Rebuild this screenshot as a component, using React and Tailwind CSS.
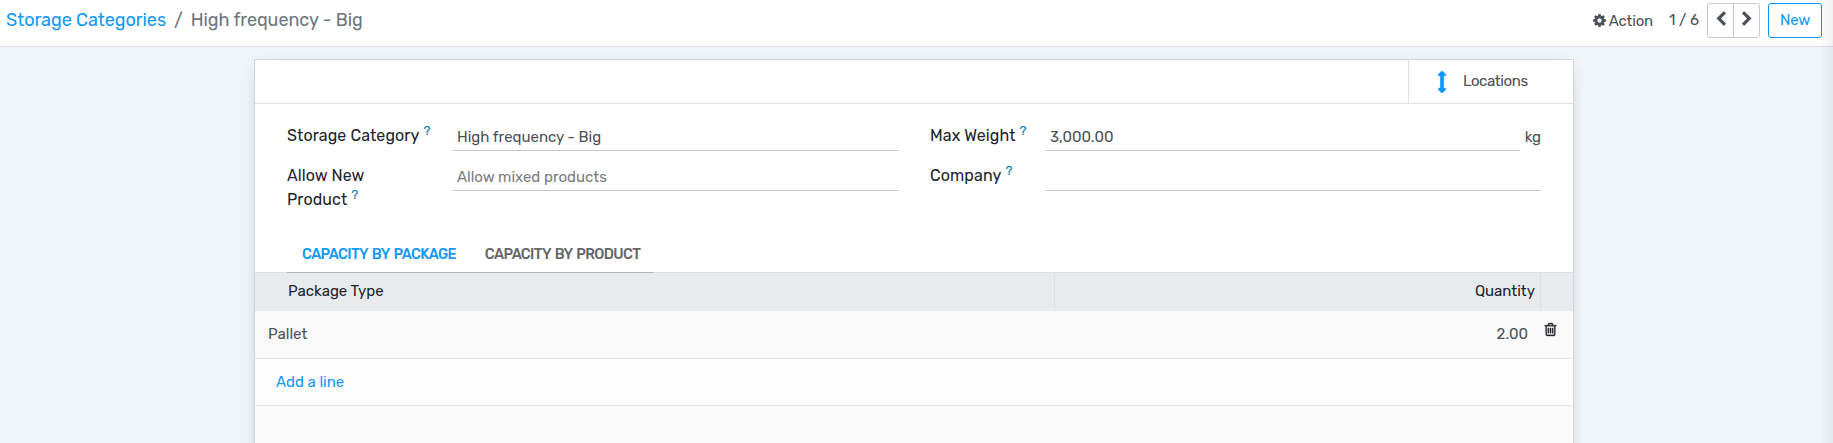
import React from 'react';

const PATHS = {
  cog: 'M1152 896q0-106-75-181t-181-75-181 75-75 181 75 181 181 75 181-75 75-181zm512-109v222q0 12-8 23t-20 13l-185 28q-19 54-39 91 35 50 107 138 10 12 10 25t-9 23q-27 37-99 108t-94 71q-12 0-26-9l-138-108q-44 23-91 38-16 136-29 186-7 28-36 28h-222q-14 0-24.500-8.500t-11.500-21.500l-28-184q-49-16-90-37l-141 107q-10 9-25 9-14 0-25-11-126-114-165-168-7-10-7-23 0-12 8-23 15-21 51-66.500t54-70.500q-27-50-41-99l-183-27q-13-2-21-12.500t-8-23.500v-222q0-12 8-23t19-13l186-28q14-46 39-92-40-57-107-138-10-12-10-24 0-10 9-23 26-36 98.500-107.500t94.500-71.500q13 0 26 10l138 107q44-23 91-38 16-136 29-186 7-28 36-28h222q14 0 24.500 8.500t11.500 21.500l28 184q49 16 90 37l142-107q9-9 24-9 13 0 25 10 129 119 165 170 7 8 7 22 0 12-8 23-15 21-51 66.500t-54 70.500q26 50 41 98l183 28q13 2 21 12.500t8 23.500z',
  left: 'M1427 301l-531 531 531 531q19 19 19 45t-19 45l-166 166q-19 19-45 19t-45-19l-742-742q-19-19-19-45t19-45l742-742q19-19 45-19t45 19l166 166q19 19 19 45t-19 45z',
  arrowsV: 'M1216 320q0 26-19 45t-45 19h-128v1024h128q26 0 45 19t19 45-19 45l-256 256q-19 19-45 19t-45-19l-256-256q-19-19-19-45t19-45 45-19h128v-1024h-128q-26 0-45-19t-19-45 19-45l256-256q19-19 45-19t45 19l256 256q19 19 19 45z',
  trash: 'M704 736v576q0 14-9 23t-23 9h-64q-14 0-23-9t-9-23v-576q0-14 9-23t23-9h64q14 0 23 9t9 23zm256 0v576q0 14-9 23t-23 9h-64q-14 0-23-9t-9-23v-576q0-14 9-23t23-9h64q14 0 23 9t9 23zm256 0v576q0 14-9 23t-23 9h-64q-14 0-23-9t-9-23v-576q0-14 9-23t23-9h64q14 0 23 9t9 23zm128 724v-948h-896v948q0 22 7 40.500t14.500 27 10.500 8.500h832q3 0 10.500-8.500t14.500-27 7-40.500zm-672-1076h448l-48-117q-7-9-17-11h-317q-10 2-17 11zm928 32v64q0 14-9 23t-23 9h-96v948q0 83-47 143.500t-113 60.500h-832q-66 0-113-58.500t-47-141.500v-952h-96q-14 0-23-9t-9-23v-64q0-14 9-23t23-9h309l70-167q15-37 54-63t79-26h320q40 0 79 26t54 63l70 167h309q14 0 23 9t9 23z',
};

function Icon({ name, className }) {
  return (
    <svg viewBox="0 0 1792 1792" fill="currentColor" className={className} aria-hidden="true">
      <path d={PATHS[name]} />
    </svg>
  );
}

function Help() {
  return <sup className="relative -top-[6px] ml-1 align-baseline text-[13px] leading-none text-[#0180a5]">?</sup>;
}

function Label({ className, children }) {
  return (
    <div className={`shrink-0 text-base leading-6 tracking-[0.1px] text-[#212529] ${className}`}>
      {children}
    </div>
  );
}

function Field({ className, children }) {
  return (
    <div className={`h-[27px] border-b border-[#c6c7c8] pl-1 text-[15px] leading-[26px] ${className}`}>
      {children}
    </div>
  );
}

function ControlPanel() {
  return (
    <header className="flex h-[47px] shrink-0 items-start justify-between border-b border-[#dcdfe3] bg-white pl-[6px] pr-[11px] pt-[3px]">
      <nav className="flex pt-1 text-lg leading-[27px] tracking-[-0.05px] text-[#6c757d]">
        <span className="text-[#1298f7]">Storage Categories</span>
        <span className="px-2">/</span>
        <span>High frequency - Big</span>
      </nav>
      <div className="flex text-[15px] leading-[34px]">
        <div className="flex items-center">
          <Icon name="cog" className="mr-[2px] size-[15px]" />
          <span className="tracking-[-0.2px]">Action</span>
        </div>
        <span className="ml-4 w-[38px]">1 / 6</span>
        <div className="flex h-[35px]">
          <button className="flex w-[27px] items-center justify-center rounded-l-[3px] border border-[#c6c7c8] pb-1">
            <Icon name="left" className="size-4" />
          </button>
          <button className="-ml-px flex w-[27px] items-center justify-center rounded-r-[3px] border border-[#c6c7c8] pb-1">
            <Icon name="left" className="size-4 -scale-x-100" />
          </button>
        </div>
        <button className="ml-2 h-[35px] w-[54px] rounded-[3px] border border-[#0c96f7] text-center leading-[33px] tracking-[-0.2px] text-[#1298f7]">
          New
        </button>
      </div>
    </header>
  );
}

function FormFields() {
  return (
    <div className="flex h-[130px] pl-8 pr-8 pt-[20px]">
      <div className="w-[611px]">
        <div className="flex h-10">
          <Label className="w-[166px]">Storage Category<Help /></Label>
          <Field className="w-[445px]">High frequency - Big</Field>
        </div>
        <div className="flex">
          <Label className="w-[166px]">Allow New<br />Product<Help /></Label>
          <Field className="w-[445px] text-[#7b7b7b]">Allow mixed products</Field>
        </div>
      </div>
      <div className="ml-8 grow">
        <div className="flex h-10">
          <Label className="w-[116px]">Max Weight<Help /></Label>
          <Field className="grow">3,000.00</Field>
          <span className="ml-[5px] text-[15px] leading-[26px]">kg</span>
        </div>
        <div className="flex">
          <Label className="w-[116px]">Company<Help /></Label>
          <Field className="grow" />
        </div>
      </div>
    </div>
  );
}

function Capacity() {
  return (
    <div className="flex grow flex-col">
      <div className="flex h-[39px] border-b border-[#dcdfe3] pl-8 text-[14.5px] font-medium leading-[40px] tracking-[-0.65px] [word-spacing:1.5px]">
        <div className="flex h-[39px] w-[367px] gap-[29px] whitespace-nowrap border-b border-[#b5b5b8] pl-[15px]">
          <span className="text-[#1298f7]">CAPACITY BY PACKAGE</span>
          <span className="text-[#666]">CAPACITY BY PRODUCT</span>
        </div>
      </div>
      <div className="flex h-[38px] bg-[#e8ebee] text-[15px] leading-[36px] text-[#212529]">
        <div className="h-[37px] w-[800px] border-r border-[#dcdfe3] pl-[33px]">Package Type</div>
        <div className="h-[37px] w-[486px] border-r border-[#dcdfe3] pr-[5px] text-right">Quantity</div>
      </div>
      <div className="flex h-12 justify-between border-b border-[#e6e8eb] bg-[#f9f9f9] pl-[13px] pr-[15px] text-[15px] leading-[46px]">
        <span>Pallet</span>
        <div className="flex">
          <span>2.00</span>
          <Icon name="trash" className="ml-[15px] mt-[11px] size-[15px] stroke-current stroke-[40] text-[#212529]" />
        </div>
      </div>
      <div className="h-[47px] border-b border-[#e6e8eb] bg-[#fcfcfc] pl-[21px] text-[15px] leading-[46px] text-[#1298f7]">
        Add a line
      </div>
      <div className="grow bg-[#f9f9f9]" />
    </div>
  );
}

export default function App() {
  return (
    <div className="relative flex h-[443px] w-full flex-col overflow-hidden bg-[#f1f6fa] font-[family-name:Rubik,Roboto,sans-serif] text-[#4c5157]">
      <ControlPanel />
      <main className="ml-[254px] mt-3 flex h-[500px] w-[1320px] shrink-0 flex-col border border-[#d3d5da] bg-white shadow-[0_5px_20px_-15px_rgba(0,0,0,0.4),0_6px_16px_rgba(0,0,40,0.08)]">
        <div className="flex h-[44px] shrink-0 justify-end border-b border-[#dcdfe3]">
          <div className="flex w-[165px] items-center border-l border-[#dcdfe3] text-[15px]">
            <Icon name="arrowsV" className="ml-[22px] size-[22px] stroke-current stroke-[50] text-[#0c96f7]" />
            <span className="ml-[10px] tracking-[-0.4px]">Locations</span>
          </div>
        </div>
        <FormFields />
        <Capacity />
      </main>
      <div className="pointer-events-none absolute inset-y-0 right-0 w-[14px] bg-linear-to-r from-transparent to-black/6" />
    </div>
  );
}
